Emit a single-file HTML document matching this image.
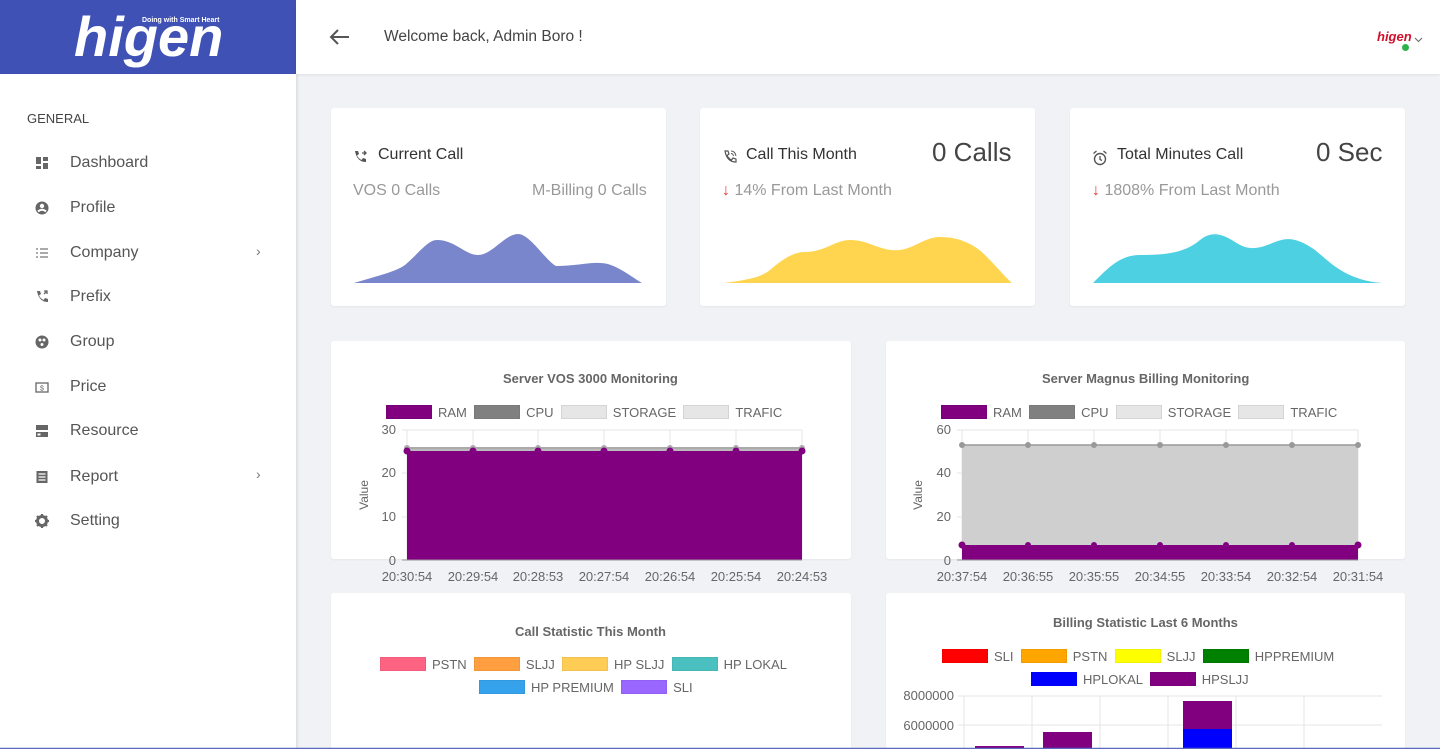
<!DOCTYPE html>
<html><head><meta charset="utf-8"><style>
*{margin:0;padding:0;box-sizing:border-box}
html,body{width:1440px;height:749px;overflow:hidden}
body{background:#f0f2f5;font-family:"Liberation Sans",sans-serif;position:relative;color:#333}
.abs{position:absolute}
#side{left:0;top:0;width:296px;height:749px;background:#fff;box-shadow:1px 0 3px rgba(0,0,0,.12)}
#logo{left:0;top:0;width:296px;height:74px;background:#3f51b5}
#top{left:296px;top:0;width:1144px;height:74px;background:#fff;box-shadow:0 1px 3px rgba(0,0,0,.08)}
.nav{position:absolute;left:70px;font-size:16px;color:#555}
.ic{position:absolute;left:35px;width:14px;height:14px}
.card{position:absolute;background:#fff;border-radius:3px;box-shadow:0 1px 2px rgba(0,0,0,.05)}
.t{position:absolute;white-space:nowrap}
.g{color:#999;font-size:16px}
.leg{position:absolute;font-size:13px;color:#666;white-space:nowrap}
.sw{display:inline-block;width:46px;height:14px;vertical-align:-2px;margin-right:6px;border:1px solid rgba(0,0,0,.05)}
.ct{position:absolute;font-size:13px;font-weight:bold;color:#666;white-space:nowrap}
</style></head><body>
<div id="side" class="abs"></div>
<div id="logo" class="abs">
<div class="t" style="left:74px;top:4px;font-size:56px;font-weight:bold;font-style:italic;color:#fff;letter-spacing:0px">higen</div>
<div class="t" style="left:142px;top:17px;font-size:7px;font-weight:bold;color:#fff">Doing with Smart Heart</div>
</div>
<div id="top" class="abs">
<svg class="abs" style="left:32px;top:28px" width="22" height="18" viewBox="0 0 22 18"><path d="M21 9H3M10 2L3 9l7 7" stroke="#555" stroke-width="2" fill="none"/></svg>
<div class="t" style="left:88px;top:28px;font-size:15.5px;color:#444">Welcome back, Admin Boro !</div>
<div class="t" style="left:1081px;top:29px;font-size:13px;font-weight:bold;font-style:italic;color:#d0102c">higen</div>
<div class="abs" style="left:1106px;top:44px;width:7px;height:7px;border-radius:50%;background:#2cb34a"></div>
<svg class="abs" style="left:1118px;top:37px" width="9" height="6"><path d="M1 1l3.5 3.5L8 1" stroke="#666" fill="none"/></svg>
</div>
<div class="t" style="left:27px;top:111px;font-size:13px;color:#444">GENERAL</div>
<svg class="ic" style="top:156px" viewBox="0 0 14 14"><path d="M1 1h5v7H1zM8 1h5v4H8zM8 7h5v6H8zM1 10h5v3H1z" fill="#666"/></svg>
<div class="nav" style="top:154px">Dashboard</div>
<svg class="ic" style="top:201px" viewBox="0 0 14 14"><circle cx="7" cy="7" r="6.5" fill="#666"/><circle cx="7" cy="5" r="2.2" fill="#fff"/><path d="M3 10.5q4-3.5 8 0" stroke="#fff" stroke-width="2" fill="none"/></svg>
<div class="nav" style="top:199px">Profile</div>
<svg class="ic" style="top:246px" viewBox="0 0 14 14"><path d="M1 3h2M5 3h8M1 7h2M5 7h8M1 11h2M5 11h8" stroke="#777" stroke-width="1.2"/></svg>
<div class="nav" style="top:244px">Company</div>
<div class="t" style="left:256px;top:243px;color:#777;font-size:14px">›</div>
<svg class="ic" style="top:290px" viewBox="0 0 14 14"><path d="M2 1l3 0 1 3-2 1.5q1.5 3 4.5 4.5l1.5-2 3 1v3q-9 0-11-11z" fill="#666"/><path d="M9 1h3v3M12 1l-3 3" stroke="#666" stroke-width="1.3" fill="none"/></svg>
<div class="nav" style="top:288px">Prefix</div>
<svg class="ic" style="top:335px" viewBox="0 0 14 14"><circle cx="7" cy="7" r="6.5" fill="#666"/><circle cx="5" cy="5" r="1.5" fill="#fff"/><circle cx="9" cy="5" r="1.5" fill="#fff"/><circle cx="7" cy="9.5" r="1.5" fill="#fff"/></svg>
<div class="nav" style="top:333px">Group</div>
<svg class="ic" style="top:380px" viewBox="0 0 14 14"><rect x="1" y="3" width="12" height="9" fill="none" stroke="#666" stroke-width="1.3"/><text x="7" y="10.5" font-size="7" text-anchor="middle" fill="#666" font-family="Liberation Sans">$</text></svg>
<div class="nav" style="top:378px">Price</div>
<svg class="ic" style="top:424px" viewBox="0 0 14 14"><rect x="1" y="1" width="12" height="5" fill="#666"/><rect x="1" y="8" width="12" height="5" fill="#666"/><rect x="2.5" y="9.5" width="3" height="2" fill="#fff"/></svg>
<div class="nav" style="top:422px">Resource</div>
<svg class="ic" style="top:470px" viewBox="0 0 14 14"><rect x="1.5" y="1" width="11" height="12" fill="#666"/><path d="M3.5 4h7M3.5 7h7M3.5 10h7" stroke="#fff" stroke-width="1.2"/></svg>
<div class="nav" style="top:468px">Report</div>
<div class="t" style="left:256px;top:466px;color:#777;font-size:14px">›</div>
<svg class="ic" style="top:514px" viewBox="0 0 14 14"><circle cx="7" cy="7" r="4.5" fill="none" stroke="#666" stroke-width="3"/><path d="M7 0v3M7 11v3M0 7h3M11 7h3M2 2l2 2M10 10l2 2M12 2l-2 2M2 12l2-2" stroke="#666" stroke-width="2.2"/></svg>
<div class="nav" style="top:512px">Setting</div>

<div class="card" style="left:331px;top:108px;width:335px;height:198px"></div>
<div class="card" style="left:700px;top:108px;width:335px;height:198px"></div>
<div class="card" style="left:1070px;top:108px;width:335px;height:198px"></div>
<svg class="abs" style="left:352px;top:150px" width="16" height="14" viewBox="0 0 14 14"><path d="M2 1l3 0 1 3-2 1.5q1.5 3 4.5 4.5l1.5-2 3 1v3q-9 0-11-11z" fill="#555"/><path d="M9 3h4M11 1l2 2-2 2" stroke="#555" stroke-width="1.3" fill="none"/></svg>
<div class="t" style="left:378px;top:146px;font-size:16px;color:#333">Current Call</div>
<div class="t g" style="left:353px;top:182px">VOS 0 Calls</div>
<div class="t g" style="left:532px;top:182px">M-Billing 0 Calls</div>
<svg class="abs" style="left:722px;top:150px" width="16" height="14" viewBox="0 0 14 14"><path d="M2 1l3 0 1 3-2 1.5q1.5 3 4.5 4.5l1.5-2 3 1v3q-9 0-11-11z" fill="none" stroke="#555" stroke-width="1.2"/><path d="M8 1q4 0 5 5M8 3.5q2 0 2.5 2.5" stroke="#555" fill="none"/></svg>
<div class="t" style="left:746px;top:146px;font-size:16px;color:#333">Call This Month</div>
<div class="t" style="left:932px;top:137px;font-size:26px;color:#444">0 Calls</div>
<div class="t g" style="left:722px;top:182px"><span style="color:#e53935">↓</span> 14% From Last Month</div>
<svg class="abs" style="left:1092px;top:150px" width="16" height="16" viewBox="0 0 16 16"><circle cx="8" cy="9" r="5.5" fill="none" stroke="#555" stroke-width="1.4"/><path d="M8 6v3.5l2 1M1.5 3.5l3-2.5M14.5 3.5l-3-2.5" stroke="#555" stroke-width="1.3" fill="none"/></svg>
<div class="t" style="left:1117px;top:146px;font-size:16px;color:#333">Total Minutes Call</div>
<div class="t" style="left:1316px;top:137px;font-size:26px;color:#444">0 Sec</div>
<div class="t g" style="left:1092px;top:182px"><span style="color:#e53935">↓</span> 1808% From Last Month</div>
<svg class="abs" style="left:0;top:0" width="1440" height="749">
<path d="M354 283C380 275 395 272 405 265C420 252 428 240 437 240C455 240 465 255 478 255C492 255 505 234 518 234C530 234 545 260 556 266C575 266 590 262 600 263C615 263 630 276 642 283Z" fill="#7986cb"/>
<path d="M724 283C745 280 760 278 770 270C785 257 795 252 805 252C825 252 835 240 850 240C870 240 880 252 900 250C915 248 925 237 940 237C960 237 975 245 985 255C998 268 1005 277 1012 283Z" fill="#ffd54f"/>
<path d="M1093 283C1108 268 1120 255 1140 255C1165 255 1185 253 1200 240C1210 232 1220 232 1235 242C1250 252 1260 248 1275 242C1290 236 1300 240 1315 250C1330 262 1345 280 1382 283Z" fill="#4dd0e1"/>
</svg>

<div class="card" style="left:331px;top:341px;width:520px;height:218px"></div>
<div class="card" style="left:886px;top:341px;width:519px;height:218px"></div>
<div class="ct" style="left:503px;top:371px">Server VOS 3000 Monitoring</div>
<div class="ct" style="left:1042px;top:371px">Server Magnus Billing Monitoring</div>
<div class="leg" style="left:386px;top:405px"><span class="sw" style="background:#800080"></span>RAM &nbsp;<span class="sw" style="background:#808080"></span>CPU &nbsp;<span class="sw" style="background:#e6e6e6;border-color:#d4d4d4"></span>STORAGE &nbsp;<span class="sw" style="background:#e6e6e6;border-color:#d4d4d4"></span>TRAFIC</div>
<div class="leg" style="left:941px;top:405px"><span class="sw" style="background:#800080"></span>RAM &nbsp;<span class="sw" style="background:#808080"></span>CPU &nbsp;<span class="sw" style="background:#e6e6e6;border-color:#d4d4d4"></span>STORAGE &nbsp;<span class="sw" style="background:#e6e6e6;border-color:#d4d4d4"></span>TRAFIC</div>
<svg class="abs" style="left:0;top:0" width="1440" height="749" font-family="Liberation Sans" font-size="12" fill="#666">
<g stroke="#e5e5e5"><path d="M407 430V561M473 430V561M538 430V561M604 430V561M670 430V561M736 430V561M802 430V561M402 430H802M402 473H802M402 517H802"/></g>
<rect x="407" y="448" width="395" height="112" fill="#bbb"/>
<path d="M407 448H802" stroke="#aaa" stroke-width="2"/>
<rect x="407" y="451" width="395" height="109" fill="#800080"/>
<g fill="#aaa"><circle cx="407" cy="448" r="3"/><circle cx="473" cy="448" r="3"/><circle cx="538" cy="448" r="3"/><circle cx="604" cy="448" r="3"/><circle cx="670" cy="448" r="3"/><circle cx="736" cy="448" r="3"/><circle cx="802" cy="448" r="3"/></g>
<g fill="#800080"><circle cx="407" cy="451" r="3.5"/><circle cx="473" cy="451" r="3.5"/><circle cx="538" cy="451" r="3.5"/><circle cx="604" cy="451" r="3.5"/><circle cx="670" cy="451" r="3.5"/><circle cx="736" cy="451" r="3.5"/><circle cx="802" cy="451" r="3.5"/></g>
<path d="M402 560H802" stroke="#999"/>
<g text-anchor="end" font-size="13"><text x="396" y="434">30</text><text x="396" y="477">20</text><text x="396" y="521">10</text><text x="396" y="565">0</text></g>
<text transform="translate(368 495) rotate(-90)" text-anchor="middle">Value</text>
<g text-anchor="middle" font-size="13"><text x="407" y="581">20:30:54</text><text x="473" y="581">20:29:54</text><text x="538" y="581">20:28:53</text><text x="604" y="581">20:27:54</text><text x="670" y="581">20:26:54</text><text x="736" y="581">20:25:54</text><text x="802" y="581">20:24:53</text></g>

<g stroke="#e5e5e5"><path d="M962 430V561M1028 430V561M1094 430V561M1160 430V561M1226 430V561M1292 430V561M1358 430V561M957 430H1358M957 473H1358M957 517H1358"/></g>
<rect x="962" y="445" width="396" height="115" fill="#cfcfcf"/>
<path d="M962 445H1358" stroke="#999" stroke-width="1.5"/>
<rect x="962" y="545" width="396" height="15" fill="#800080"/>
<g fill="#999"><circle cx="962" cy="445" r="3"/><circle cx="1028" cy="445" r="3"/><circle cx="1094" cy="445" r="3"/><circle cx="1160" cy="445" r="3"/><circle cx="1226" cy="445" r="3"/><circle cx="1292" cy="445" r="3"/><circle cx="1358" cy="445" r="3"/></g>
<g fill="#800080"><circle cx="962" cy="545" r="3.5"/><circle cx="1028" cy="545" r="3"/><circle cx="1094" cy="545" r="3"/><circle cx="1160" cy="545" r="3"/><circle cx="1226" cy="545" r="3"/><circle cx="1292" cy="545" r="3"/><circle cx="1358" cy="545" r="3.5"/></g>
<path d="M957 560H1358" stroke="#999"/>
<g text-anchor="end" font-size="13"><text x="951" y="434">60</text><text x="951" y="477">40</text><text x="951" y="521">20</text><text x="951" y="565">0</text></g>
<text transform="translate(922 495) rotate(-90)" text-anchor="middle">Value</text>
<g text-anchor="middle" font-size="13"><text x="962" y="581">20:37:54</text><text x="1028" y="581">20:36:55</text><text x="1094" y="581">20:35:55</text><text x="1160" y="581">20:34:55</text><text x="1226" y="581">20:33:54</text><text x="1292" y="581">20:32:54</text><text x="1358" y="581">20:31:54</text></g>
</svg>

<div class="card" style="left:331px;top:593px;width:520px;height:156px"></div>
<div class="card" style="left:886px;top:593px;width:519px;height:156px"></div>
<div class="ct" style="left:515px;top:624px">Call Statistic This Month</div>
<div class="ct" style="left:1053px;top:615px">Billing Statistic Last 6 Months</div>
<div class="leg" style="left:380px;top:657px"><span class="sw" style="background:#ff6384"></span>PSTN &nbsp;<span class="sw" style="background:#ff9f40"></span>SLJJ &nbsp;<span class="sw" style="background:#ffcd56"></span>HP SLJJ &nbsp;<span class="sw" style="background:#4bc0c0"></span>HP LOKAL</div>
<div class="leg" style="left:479px;top:680px"><span class="sw" style="background:#36a2eb"></span>HP PREMIUM &nbsp;<span class="sw" style="background:#9966ff"></span>SLI</div>
<div class="leg" style="left:942px;top:649px"><span class="sw" style="background:#f00"></span>SLI &nbsp;<span class="sw" style="background:#ffa500"></span>PSTN &nbsp;<span class="sw" style="background:#ff0"></span>SLJJ &nbsp;<span class="sw" style="background:#008000"></span>HPPREMIUM</div>
<div class="leg" style="left:1031px;top:672px"><span class="sw" style="background:#00f"></span>HPLOKAL &nbsp;<span class="sw" style="background:#800080"></span>HPSLJJ</div>
<svg class="abs" style="left:0;top:0" width="1440" height="749" font-family="Liberation Sans" font-size="13" fill="#666">
<g stroke="#e5e5e5"><path d="M964 696V749M1032 696V749M1100 696V749M1168 696V749M1236 696V749M1304 696V749M958 696H1382M958 725H1382"/></g>
<g text-anchor="end"><text x="954" y="700">8000000</text><text x="954" y="730">6000000</text></g>
<rect x="975" y="746" width="49" height="3" fill="#800080"/>
<rect x="1043" y="732" width="49" height="17" fill="#800080"/>
<rect x="1183" y="701" width="49" height="28" fill="#800080"/>
<rect x="1183" y="729" width="49" height="20" fill="#00f"/>
<path d="M0 748.5H1440" stroke="#5c6bc0" stroke-width="1.5"/>
</svg>
</body></html>
